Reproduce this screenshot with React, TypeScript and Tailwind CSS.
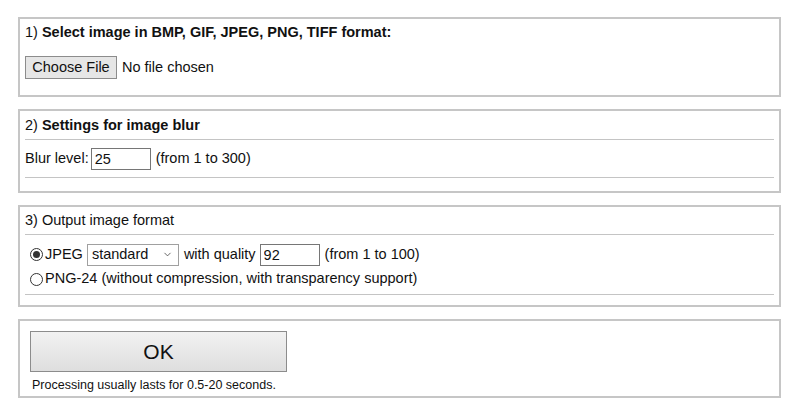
import { ChevronDown } from "lucide-react";

function Radio({ checked }: { checked?: boolean }) {
  return (
    <span className="ml-[5px] mr-[2px] flex h-[13px] w-[13px] items-center justify-center rounded-full border border-[#333] bg-white">
      {checked && <span className="h-[7px] w-[7px] rounded-full bg-[#333]" />}
    </span>
  );
}

function Rule() {
  return <div className="mr-[5px] h-px bg-[#c4c4c4]" />;
}

export default function App() {
  return (
    <div className="min-h-[406px] bg-white px-[18px] pt-[17px] font-['Liberation_Sans',Arial,sans-serif] text-[14.5px] text-[#111]">
      <div className="flex w-[763px] flex-col gap-[12px]">
        {/* 1 */}
        <div className="h-[80px] border-2 border-[#c6c6c6] px-[5px]">
          <div className="flex h-[27px] items-center pt-[1px]">
            1)&nbsp;<b>Select image in BMP, GIF, JPEG, PNG, TIFF format:</b>
          </div>
          <div className="mt-[10px] flex items-center">
            <button className="h-[23px] w-[92px] border border-[#8c8c8c] bg-[#e6e6e6] text-[14.5px] text-[#111]">
              Choose File
            </button>
            <span className="ml-[5px]">No file chosen</span>
          </div>
        </div>

        {/* 2 */}
        <div className="h-[84px] border-2 border-[#c6c6c6] pl-[5px]">
          <div className="flex h-[28px] items-center pt-[1px]">
            2)&nbsp;<b>Settings for image blur</b>
          </div>
          <Rule />
          <div className="flex h-[37px] items-center">
            <span>Blur level:</span>
            <input
              readOnly
              value="25"
              className="ml-[2px] h-[22px] w-[60px] border border-[#767676] px-[3px] text-[14.5px] outline-none"
            />
            <span className="ml-[5px]">(from 1 to 300)</span>
          </div>
          <Rule />
        </div>

        {/* 3 */}
        <div className="h-[102px] border-2 border-[#c6c6c6] pl-[5px]">
          <div className="flex h-[27px] items-center">3) Output image format</div>
          <Rule />
          <div className="flex h-[34px] items-center pt-[5px]">
            <Radio checked />
            <span>JPEG</span>
            <div className="ml-[4px] flex h-[22px] w-[92px] items-center justify-between border border-[#a0a0a0] bg-white pl-[4px] pr-[5px]">
              <span>standard</span>
              <ChevronDown size={11} strokeWidth={1.75} className="text-[#444]" />
            </div>
            <span className="ml-[5px]">with quality</span>
            <input
              readOnly
              value="92"
              className="ml-[4px] h-[22px] w-[60px] border border-[#767676] px-[3px] text-[14.5px] outline-none"
            />
            <span className="ml-[5px]">(from 1 to 100)</span>
          </div>
          <div className="flex h-[20px] items-center">
            <Radio />
            <span>PNG-24 (without compression, with transparency support)</span>
          </div>
          <div className="h-[5px]" />
          <Rule />
        </div>

        {/* 4 */}
        <div className="h-[79px] border-2 border-[#c6c6c6] pl-[10px] pt-[10px]">
          <button className="h-[41px] w-[257px] border border-[#8c8c8c] bg-gradient-to-b from-[#f2f2f2] to-[#dedede] text-[21px] text-[#111]">
            OK
          </button>
          <div className="ml-[2px] mt-[6px] text-[12.5px] leading-[15px]">Processing usually lasts for 0.5-20 seconds.</div>
        </div>
      </div>
    </div>
  );
}
